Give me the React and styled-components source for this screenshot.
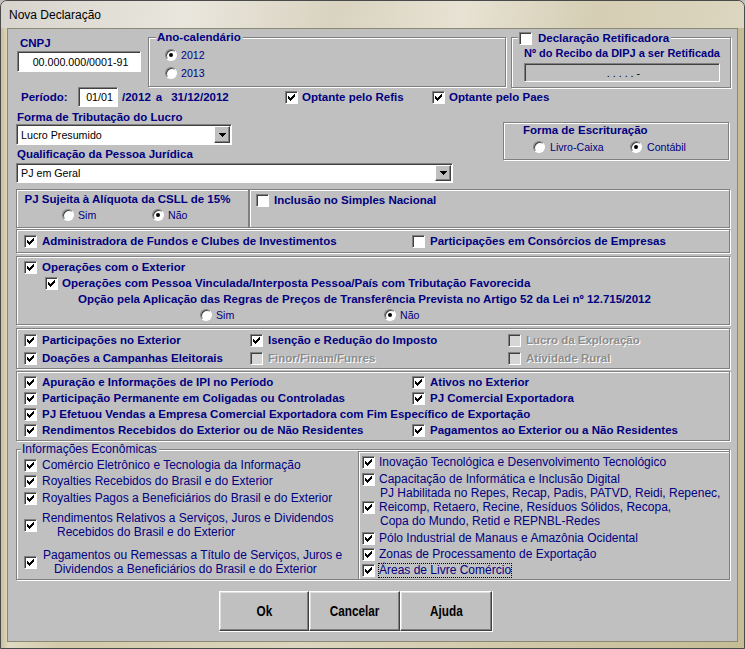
import React from 'react'
import styled, { createGlobalStyle, css } from 'styled-components'

const NAVY = '#000080'
const FONT = '"Liberation Sans", Arial, sans-serif'

const GlobalStyle = createGlobalStyle`
  html, body { margin: 0; padding: 0; }
  body { background: #c0c0c0; font-family: ${FONT}; }
  *, *::before, *::after { box-sizing: border-box; }
`

const etched = css`
  border: 1px solid #808080;
  box-shadow: inset 1px 1px 0 #fff, 1px 1px 0 #fff;
`

const sunken = css`
  border: 1px solid;
  border-color: #808080 #fff #fff #808080;
  box-shadow: inset 1px 1px 0 #404040;
`

const Window = styled.div`
  width: 745px;
  height: 649px;
  display: flex;
  flex-direction: column;
  border: 1px solid #4a4a4a;
  border-radius: 7px 7px 0 0;
  overflow: hidden;
  background: linear-gradient(90deg, #c9c09c 0%, #e0dac3 1%, #d2caa9 8%, #dcd6c0 40%, #d0c8a7 70%, #c6bd97 100%);
`

const TitleBar = styled.div`
  height: 27px;
  flex: none;
  display: flex;
  align-items: center;
  padding-left: 8px;
  background: linear-gradient(100deg, #d6d4cd 0%, #e9e6dd 25%, #d9d3c0 45%, #e7e2d3 62%, #d5ceb4 80%, #ddd6c0 100%);
  font: 12px ${FONT};
  color: #000;
`

const Body = styled.div`
  flex: 1;
  margin: 0 6px 6px;
  border: 1px solid #8d8874;
  background: #c0c0c0;
  display: flex;
  flex-direction: column;
`

const Row = styled.div`
  display: flex;
  align-items: ${p => p.$align || 'flex-start'};
  flex: none;
  height: ${p => p.$h}px;
  margin-top: ${p => p.$mt || 0}px;
  margin-left: ${p => p.$ml || 0}px;
`

const Column = styled.div`
  display: flex;
  flex-direction: column;
  flex: none;
  width: ${p => p.$w}px;
  margin: ${p => p.$mt || 0}px 0 0 ${p => p.$ml || 0}px;
  padding: ${p => p.$pt || 0}px 0 0 ${p => p.$pl || 0}px;
`

const Panel = styled.div`
  ${etched}
  position: relative;
  flex: none;
  width: ${p => p.$w}px;
  height: ${p => p.$h}px;
  margin: ${p => p.$mt || 0}px 0 0 ${p => p.$ml || 0}px;
  padding: ${p => p.$pad || '0'};
`

const InfoGroup = styled(Panel)`
  display: grid;
  grid-template-columns: 341px 1fr;
`

const SubBox = styled.div`
  border-left: 1px solid #808080;
  border-top: 1px solid #808080;
  box-shadow: inset 1px 1px 0 #fff;
  margin-top: 1px;
  padding: 2px 0 0 3px;
`

const Legend = styled.div`
  position: absolute;
  top: ${p => p.$top ?? -7}px;
  left: ${p => p.$left}px;
  height: 13px;
  padding: 0 2px 0 1px;
  display: flex;
  align-items: center;
  gap: 6px;
  background: #c0c0c0;
`

const Line = styled.div`
  display: flex;
  align-items: center;
  flex: none;
  height: ${p => p.$h}px;
  margin-left: ${p => p.$ml || 0}px;
  margin-top: ${p => p.$mt || 0}px;
  justify-content: ${p => p.$center ? 'center' : 'flex-start'};
  ${p => p.$w && `width: ${p.$w}px;`}
`

const CheckGrid = styled.div`
  display: grid;
  grid-template-columns: ${p => p.$cols};
  grid-auto-rows: ${p => p.$row}px;
  align-items: center;
`

const Text = styled.span`
  display: block;
  flex: none;
  font-family: ${FONT};
  font-size: ${p => p.$size || (p.$plain ? 12 : 11.5)}px;
  font-weight: ${p => (p.$plain ? 400 : 700)};
  line-height: ${p => p.$lh || 13}px;
  color: ${p => (p.$off ? '#8c8c8c' : NAVY)};
  text-shadow: ${p => (p.$off ? '1px 1px 0 #fff' : 'none')};
  white-space: nowrap;
  margin-left: ${p => p.$ml || 0}px;
  margin-right: ${p => p.$mr || 0}px;
  ${p => p.$w && `width: ${p.$w}px;`}
  ${p => p.$focus && 'outline: 1px dotted #000; outline-offset: 0;'}
`

const Item = styled.label`
  display: flex;
  align-items: center;
  flex: none;
  gap: ${p => p.$gap ?? 5}px;
  ${p => p.$w && `width: ${p.$w}px;`}
  ${p => p.$span && 'grid-column: 1 / -1;'}
`

const Box = styled.span`
  ${sunken}
  width: 13px;
  height: 13px;
  flex: none;
  background: ${p => (p.$off ? '#d6d6d6' : '#fff')};
  svg { display: block; }
`

const Dot = styled.span`
  ${sunken}
  width: 12px;
  height: 12px;
  flex: none;
  border-radius: 50%;
  background: #fff;
  display: flex;
  align-items: center;
  justify-content: center;
  &::after {
    content: '';
    width: 4px;
    height: 4px;
    border-radius: 50%;
    background: #000;
    display: ${p => (p.$on ? 'block' : 'none')};
  }
`

const Field = styled.div`
  ${sunken}
  flex: none;
  width: ${p => p.$w}px;
  height: ${p => p.$h}px;
  margin-top: ${p => p.$mt || 0}px;
  background: ${p => (p.$disabled ? '#c0c0c0' : '#fff')};
  display: flex;
  align-items: center;
  justify-content: ${p => (p.$center ? 'center' : 'flex-start')};
  padding: 1px 1px 1px 4px;
  font: 10.7px ${FONT};
  color: #000;
  white-space: nowrap;
`

const DropButton = styled.span`
  margin-left: auto;
  width: 16px;
  height: 100%;
  flex: none;
  background: #c0c0c0;
  border: 1px solid;
  border-color: #fff #404040 #404040 #fff;
  box-shadow: inset -1px -1px 0 #808080;
  display: flex;
  align-items: center;
  justify-content: center;
  svg { display: block; }
`

const ButtonBar = styled.div`
  display: flex;
  width: fit-content;
  margin: 11px 0 0 211px;
  border-right: 1px solid #fff;
  border-bottom: 1px solid #fff;
`

const Button = styled.button`
  width: ${p => p.$w}px;
  height: 40px;
  padding: 0;
  background: #c0c0c0;
  border: 1px solid;
  border-color: #fff #404040 #404040 #fff;
  box-shadow: inset -1px -1px 0 #808080, inset 1px 1px 0 #dfdfdf;
  color: #000;
`

const ButtonLabel = styled.span`
  display: inline-block;
  font: bold 14px ${FONT};
  transform: scaleX(0.84);
`

const TICK = [[0, 2], [1, 3], [2, 4], [3, 3], [4, 2], [5, 1], [6, 0]]

const CheckMark = () => (
  <svg width="11" height="11" viewBox="0 0 11 11" shapeRendering="crispEdges">
    {TICK.map(([x, y]) => (
      <rect key={x} x={x + 2} y={y + 2} width="1" height="3" fill="#000" />
    ))}
  </svg>
)

const Check = ({ on, off, gap, plain, focus, w, span, size, children }) => (
  <Item $gap={gap} $w={w} $span={span}>
    <Box $off={off}>{on && <CheckMark />}</Box>
    <Text $plain={plain} $off={off} $focus={focus} $size={size}>{children}</Text>
  </Item>
)

const MultiCheck = ({ lines, indents, lh = 14, gap }) => (
  <Item $gap={gap}>
    <Box><CheckMark /></Box>
    <div>
      {lines.map((l, i) => (
        <Text key={i} $plain $lh={lh} $ml={indents ? indents[i] : 0}>{l}</Text>
      ))}
    </div>
  </Item>
)

const Radio = ({ on, w, gap = 4, children }) => (
  <Item $gap={gap} $w={w}>
    <Dot $on={on} />
    <Text $plain $size={10.6}>{children}</Text>
  </Item>
)

const Select = ({ w, h, mt, children }) => (
  <Field $w={w} $h={h} $mt={mt}>
    {children}
    <DropButton>
      <svg width="7" height="4" viewBox="0 0 7 4" shapeRendering="crispEdges">
        <polygon points="0,0 7,0 3.5,4" fill="#000" />
      </svg>
    </DropButton>
  </Field>
)

export default function App() {
  return (
    <>
      <GlobalStyle />
      <Window>
        <TitleBar>Nova Declaração</TitleBar>
        <Body>
          <Row $h={58}>
            <Column $w={124} $ml={9} $mt={8}>
              <Text $ml={3}>CNPJ</Text>
              <Field $w={124} $h={21} $mt={1} $center>00.000.000/0001-91</Field>
            </Column>
            <Panel $w={358} $h={50} $ml={7} $mt={8} $pad="8px 0 0 16px">
              <Legend $left={7}><Text>Ano-calendário</Text></Legend>
              <Line $h={18}><Radio on>2012</Radio></Line>
              <Line $h={18}><Radio>2013</Radio></Line>
            </Panel>
            <Panel $w={220} $h={51} $ml={5} $mt={8} $pad="9px 0 0 12px">
              <Legend $left={6} $top={-6}>
                <Box />
                <Text>Declaração Retificadora</Text>
              </Legend>
              <Text $size={11}>Nº do Recibo da DIPJ a ser Retificada</Text>
              <Field $w={196} $h={19} $mt={3} $center $disabled>. . . . . -</Field>
            </Panel>
          </Row>

          <Row $h={20} $align="center">
            <Line $h={20} $w={277}>
              <Text $ml={13} $w={57}>Período:</Text>
              <Field $w={40} $h={20} $center>01/01</Field>
              <Text $ml={4}>/2012</Text>
              <Text $ml={5}>a</Text>
              <Text $ml={9}>31/12/2012</Text>
            </Line>
            <Check on gap={4} w={147}>Optante pelo Refis</Check>
            <Check on gap={4}>Optante pelo Paes</Check>
          </Row>

          <Row $h={82}>
            <Column $w={437} $ml={8} $pt={4}>
              <Text $ml={1}>Forma de Tributação do Lucro</Text>
              <Select w={216} h={21}>Lucro Presumido</Select>
              <Line $h={13} $mt={3}><Text $ml={1}>Qualificação da Pessoa Jurídica</Text></Line>
              <Select w={437} h={20} mt={2}>PJ em Geral</Select>
            </Column>
            <Panel $w={226} $h={38} $ml={50} $mt={15} $pad="1px 0 0 19px">
              <Text>Forma de Escrituração</Text>
              <Line $h={20} $ml={10}>
                <Radio w={97} gap={5}>Livro-Caixa</Radio>
                <Radio on gap={5}>Contábil</Radio>
              </Line>
            </Panel>
          </Row>

          <Row $h={39} $ml={8}>
            <Panel $w={233} $h={39} $pad="2px 0 0 0">
              <Line $h={14} $center><Text $mr={10}>PJ Sujeita à Alíquota da CSLL de 15%</Text></Line>
              <Line $h={18} $ml={45}>
                <Radio w={90}>Sim</Radio>
                <Radio on>Não</Radio>
              </Line>
            </Panel>
            <Panel $w={481} $h={39} $pad="4px 0 0 6px">
              <Check gap={5}>Inclusão no Simples Nacional</Check>
            </Panel>
          </Row>

          <Panel $w={714} $h={24} $ml={8} $mt={1} $pad="0 0 0 7px">
            <CheckGrid $cols="388px 1fr" $row={22}>
              <Check on>Administradora de Fundos e Clubes de Investimentos</Check>
              <Check>Participações em Consórcios de Empresas</Check>
            </CheckGrid>
          </Panel>

          <Panel $w={714} $h={69} $ml={8} $mt={3} $pad="2px 0 0 7px">
            <Line $h={16}><Check on>Operações com o Exterior</Check></Line>
            <Line $h={16} $ml={21}>
              <Check on gap={4}>Operações com Pessoa Vinculada/Interposta Pessoa/País com Tributação Favorecida</Check>
            </Line>
            <Line $h={17} $ml={54}>
              <Text>Opção pela Aplicação das Regras de Preços de Transferência Prevista no Artigo 52 da Lei nº 12.715/2012</Text>
            </Line>
            <Line $h={14} $ml={176}>
              <Radio w={184}>Sim</Radio>
              <Radio on>Não</Radio>
            </Line>
          </Panel>

          <Panel $w={714} $h={41} $ml={8} $mt={3} $pad="2px 0 0 7px">
            <CheckGrid $cols="226px 258px 1fr" $row={18}>
              <Check on>Participações no Exterior</Check>
              <Check on>Isenção e Redução do Imposto</Check>
              <Check off>Lucro da Exploração</Check>
              <Check on>Doações a Campanhas Eleitorais</Check>
              <Check off>Finor/Finam/Funres</Check>
              <Check off>Atividade Rural</Check>
            </CheckGrid>
          </Panel>

          <Panel $w={714} $h={70} $ml={8} $mt={2} $pad="2px 0 0 7px">
            <CheckGrid $cols="388px 1fr" $row={16}>
              <Check on>Apuração e Informações de IPI no Período</Check>
              <Check on>Ativos no Exterior</Check>
              <Check on>Participação Permanente em Coligadas ou Controladas</Check>
              <Check on>PJ Comercial Exportadora</Check>
              <Check on span>PJ Efetuou Vendas a Empresa Comercial Exportadora com Fim Específico de Exportação</Check>
              <Check on>Rendimentos Recebidos do Exterior ou de Não Residentes</Check>
              <Check on>Pagamentos ao Exterior ou a Não Residentes</Check>
            </CheckGrid>
          </Panel>

          <InfoGroup $w={714} $h={131} $ml={8} $mt={8}>
            <Legend $left={4}><Text $plain>Informações Econômicas</Text></Legend>
            <Column $w={341} $pt={7} $pl={7}>
              <Line $h={16}><Check on plain>Comércio Eletrônico e Tecnologia da Informação</Check></Line>
              <Line $h={17}><Check on plain>Royalties Recebidos do Brasil e do Exterior</Check></Line>
              <Line $h={16}><Check on plain>Royalties Pagos a Beneficiários do Brasil e do Exterior</Check></Line>
              <Line $h={28} $mt={5}>
                <MultiCheck
                  lines={['Rendimentos Relativos a Serviços, Juros e Dividendos', 'Recebidos do Brasil e do Exterior']}
                  indents={[0, 15]}
                />
              </Line>
              <Line $h={28} $mt={9}>
                <MultiCheck
                  lines={['Pagamentos ou Remessas a Título de Serviços, Juros e', 'Dividendos a Beneficiários do Brasil e do Exterior']}
                  indents={[1, 12]}
                />
              </Line>
            </Column>
            <SubBox>
              <Line $h={17}><Check on plain gap={4}>Inovação Tecnológica e Desenvolvimento Tecnológico</Check></Line>
              <Line $h={16}><Check on plain gap={4}>Capacitação de Informática e Inclusão Digital</Check></Line>
              <Line $h={42} $mt={-1}>
                <MultiCheck
                  gap={4}
                  lines={[
                    'PJ Habilitada no Repes, Recap, Padis, PATVD, Reidi, Repenec,',
                    'Reicomp, Retaero, Recine, Resíduos Sólidos, Recopa,',
                    'Copa do Mundo, Retid e REPNBL-Redes',
                  ]}
                  indents={[1, 0, 1]}
                />
              </Line>
              <Line $h={16} $mt={2}><Check on plain gap={4}>Pólo Industrial de Manaus e Amazônia Ocidental</Check></Line>
              <Line $h={16}><Check on plain gap={4}>Zonas de Processamento de Exportação</Check></Line>
              <Line $h={16}><Check on plain gap={4} focus>Áreas de Livre Comércio</Check></Line>
            </SubBox>
          </InfoGroup>

          <ButtonBar>
            <Button $w={90}><ButtonLabel>Ok</ButtonLabel></Button>
            <Button $w={91}><ButtonLabel>Cancelar</ButtonLabel></Button>
            <Button $w={92}><ButtonLabel>Ajuda</ButtonLabel></Button>
          </ButtonBar>
        </Body>
      </Window>
    </>
  )
}
